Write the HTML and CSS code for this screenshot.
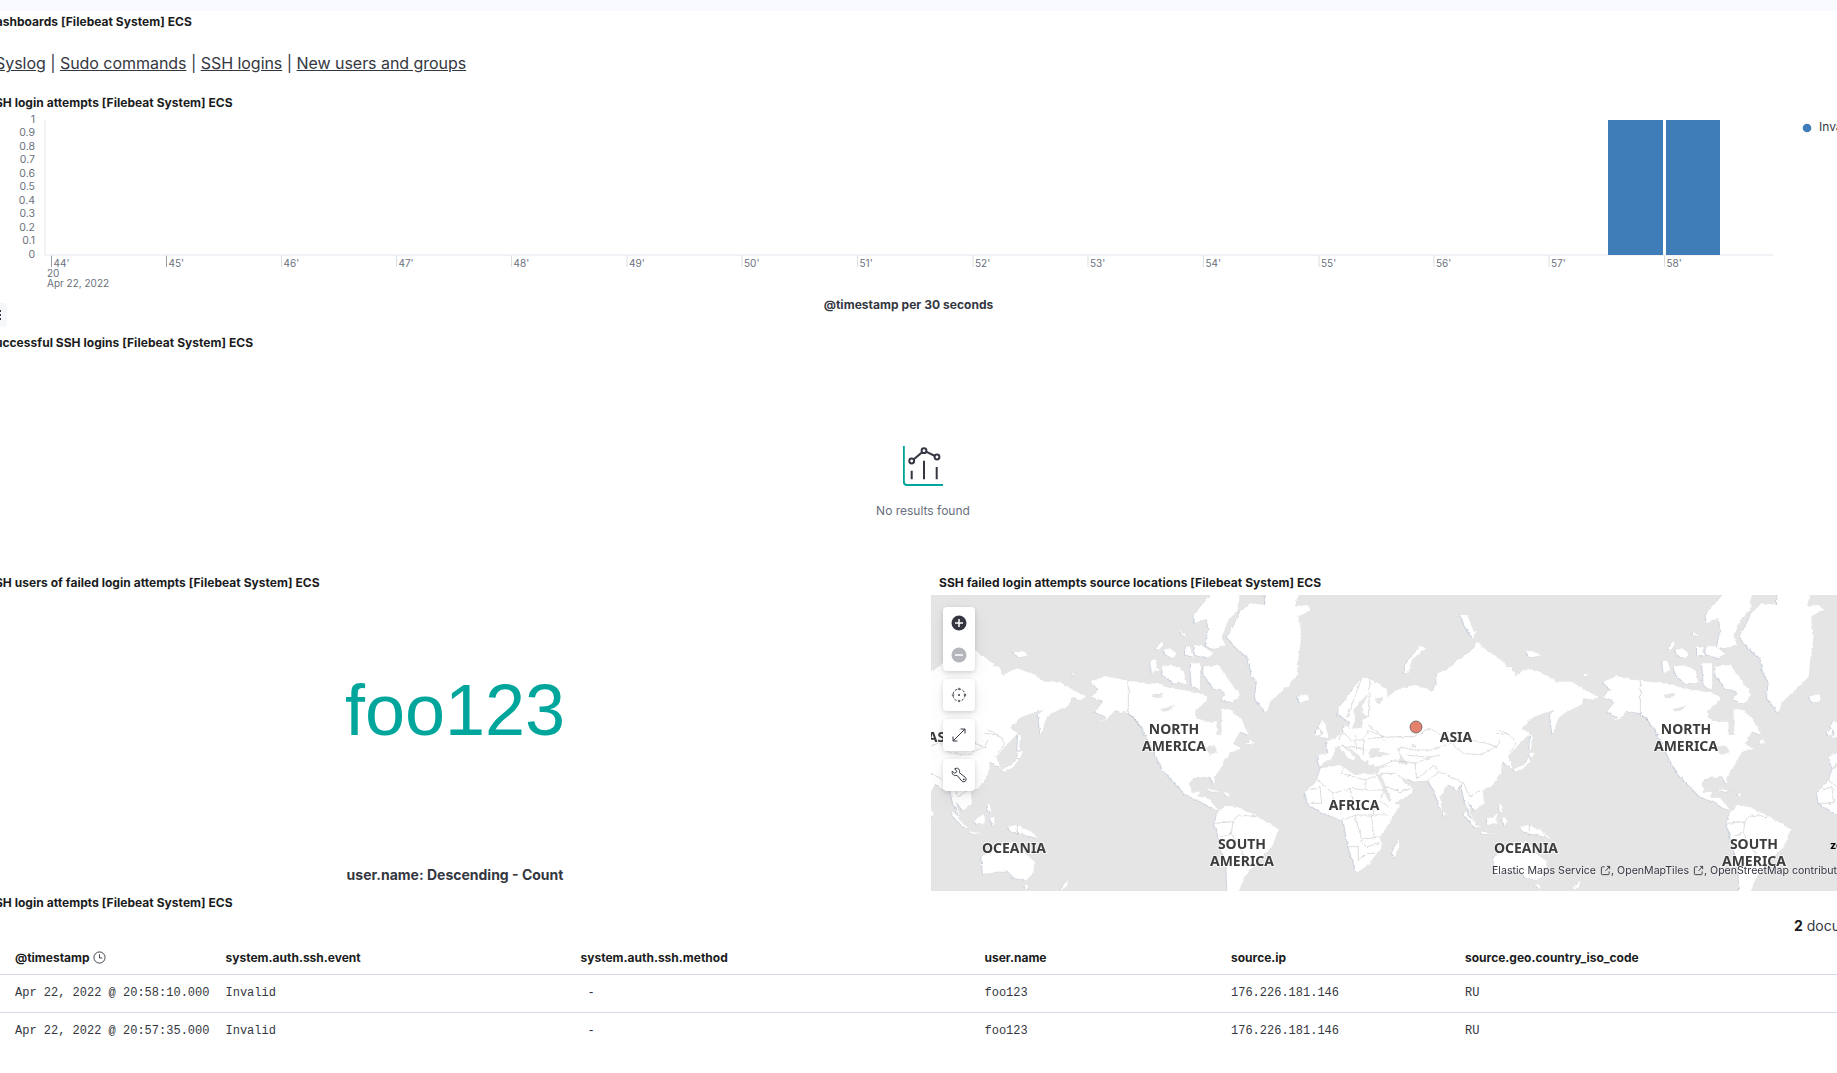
FILE: index.html
```html
<!DOCTYPE html>
<html lang="en">
<head>
<meta charset="utf-8">
<title>Dashboards [Filebeat System] ECS</title>
<link rel="stylesheet" href="styles.css">
</head>
<body>
<div class="page">
  <div class="topbar"></div>

  <section class="panel panel-links">
    <h2 class="title">Dashboards [Filebeat System] ECS</h2>
    <p class="links"><a href="#">Syslog</a> | <a href="#">Sudo commands</a> | <a href="#">SSH logins</a> | <a href="#">New users and groups</a></p>
  </section>

  <section class="panel panel-chart">
    <h2 class="title">SSH login attempts [Filebeat System] ECS</h2>
    <svg class="chart" viewBox="-13 114 1850 216" width="1850" height="216">
      <g class="ticks">
        <path class="tick-dark" d="M51.5 255v12M166.5 255v12"/>
        <path d="M281.5 255v12M396.5 255v12M511.5 255v12M627 255v12M742 255v12M857.5 255v12M973 255v12M1088 255v12M1203.5 255v12M1319 255v12M1434 255v12M1549 255v12M1664.5 255v12"/>
      </g>
      <path class="axis" d="M45 120V255H1773"/>
      <rect class="bar" x="1608" y="120" width="55" height="135"/>
      <rect class="bar" x="1666" y="120" width="54" height="135"/>
      <g class="ylabels">
        <text x="35" y="123">1</text><text x="35" y="136">0.9</text><text x="35" y="150">0.8</text><text x="35" y="163">0.7</text><text x="35" y="177">0.6</text><text x="35" y="190">0.5</text><text x="35" y="204">0.4</text><text x="35" y="217">0.3</text><text x="35" y="231">0.2</text><text x="35" y="244">0.1</text><text x="35" y="258">0</text>
      </g>
      <g class="xlabels">
        <text x="53.500" y="267">44'</text><text x="168.500" y="267">45'</text><text x="283.500" y="267">46'</text><text x="398.500" y="267">47'</text><text x="513.500" y="267">48'</text><text x="629" y="267">49'</text><text x="744" y="267">50'</text><text x="859.500" y="267">51'</text><text x="975" y="267">52'</text><text x="1090" y="267">53'</text><text x="1205.500" y="267">54'</text><text x="1321" y="267">55'</text><text x="1436" y="267">56'</text><text x="1551" y="267">57'</text><text x="1666.500" y="267">58'</text>
        <text x="47" y="277">20</text><text x="47" y="287">Apr 22, 2022</text>
      </g>
      <text class="xtitle" x="908.500" y="309">@timestamp per 30 seconds</text>
      <circle class="legend-dot" cx="1807" cy="128" r="4.300"/>
      <text class="legend" x="1819" y="131">Invalid</text>
    </svg>
    <div class="handle"><span></span><span></span><span></span></div>
  </section>

  <section class="panel panel-empty">
    <h2 class="title">Successful SSH logins [Filebeat System] ECS</h2>
    <div class="empty">
      <svg class="empty-icon" viewBox="0 0 40 40" width="40" height="40">
        <path class="empty-axis" d="M.8 0V35.500Q.8 39 4.300 39H40"/>
        <path class="empty-lines" d="M8.700 24.700V33.300M21 14.700V33.300M33.700 21V33.300M8.700 15L21 4.700L34 11"/>
        <circle class="empty-node" cx="8.700" cy="15" r="2.400"/><circle class="empty-node" cx="21" cy="4.700" r="2.400"/><circle class="empty-node" cx="34" cy="11" r="2.400"/>
      </svg>
      <div class="empty-text">No results found</div>
    </div>
  </section>

  <div class="split">
    <section class="panel cloud-panel">
      <h2 class="title">SSH users of failed login attempts [Filebeat System] ECS</h2>
      <div class="cloud">foo123</div>
      <div class="cloud-label">user.name: Descending - Count</div>
    </section>
    <section class="panel map-panel">
      <h2 class="title title-inset">SSH failed login attempts source locations [Filebeat System] ECS</h2>
      <div class="map">
        <svg class="map-svg" viewBox="931 595 928 296" width="928" height="296">
          <defs>
            <filter id="rough" filterUnits="userSpaceOnUse" x="931" y="595" width="928" height="296">
              <feTurbulence type="fractalNoise" baseFrequency=".22" numOctaves="2" seed="4" result="noise"/>
              <feDisplacementMap in="SourceGraphic" in2="noise" scale="3.500" xChannelSelector="R" yChannelSelector="G"/>
            </filter>
            <g id="land">
              <g transform="translate(1300 640) scale(.33333)">
                <path d="M200,112 L225,125 L262,150 L262,170 L300,145 L345,135 L380,145 L395,160 L408,130 L412,100 L440,90 L470,62 L510,35 L530,5 L560,30 L620,75 L620,360 L600,360 L590,378 L600,400 L575,440 L548,452 L552,490 L525,512 L502,482 L508,505 L522,545 L495,490 L482,432 L470,450 L442,432 L420,470 L425,512 L400,450 L385,422 L340,425 L320,415 L335,445 L338,458 L282,490 L300,495 L270,545 L240,590 L245,622 L222,650 L210,672 L170,698 L145,622 L130,540 L72,522 L20,490 L14,460 L50,420 L62,385 L55,370 L52,345 L85,340 L78,305 L105,295 L130,270 L135,255 L145,265 L150,245 L115,225 L115,205 L135,180 L165,135 L185,115Z"/>
                <path d="M65,240 L75,250 L85,290 L55,295 L70,280 L55,260Z"/>
                <path d="M48,272 L60,266 L60,285 L48,287Z"/>
                <path d="M295,600 L300,605 L285,650 L275,640Z"/>
                <path d="M360,20 L375,25 L335,60 L325,100 L312,100 L320,65Z"/>
                <path d="M430,515 L437,520 L434,530 L428,525Z"/>
              </g>
              <g transform="translate(1500 640) scale(.33333)">
                <path d="M-10,80 L35,82 L45,105 L85,85 L130,100 L170,125 L215,125 L255,150 L295,170 L280,180 L250,175 L245,195 L195,218 L175,235 L157,285 L150,225 L165,210 L145,215 L100,232 L65,265 L90,280 L60,310 L30,345 L8,355 L25,350 L38,385 L22,375 L5,365 L3,405 L-10,400Z"/>
                <path d="M90,285 L97,285 L93,330 L88,330Z"/>
                <path d="M90,340 L105,335 L95,355 L85,350Z"/>
                <path d="M85,355 L92,360 L72,385 L45,395 L40,388 L70,375Z"/>
                <path d="M75,32 L98,34 L125,48 L90,52Z"/>
                <path d="M255,102 L263,103 L260,108 L253,107Z"/>
                <path d="M240,718 L235,740 L215,752 L228,735Z"/>
              </g>
              <g transform="translate(1380 570) scale(.33333)">
                <path d="M240,135 L262,135 L282,185 L290,182 L278,203 L258,175Z"/>
                <path d="M255,725 L300,775 L290,775 L250,735Z"/>
                <path d="M305,785 L345,790 L305,793Z"/>
                <path d="M320,750 L350,730 L350,760 L325,765Z"/>
                <path d="M365,745 L380,740 L375,770Z"/>
                <path d="M355,700 L365,705 L370,730 L358,720Z"/>
                <path d="M420,770 L445,765 L490,785 L510,805 L470,795 L430,785Z"/>
                <path d="M340,860 L370,840 L395,825 L415,825 L440,815 L470,850 L500,875 L495,915 L470,930 L440,925 L420,905 L385,905 L345,915Z"/>
                <path d="M465,945 L480,945 L475,958Z"/>
                <path d="M1050,725 L1075,705 L1110,712 L1160,735 L1232,778 L1212,830 L1170,870 L1130,920 L1110,970 L1078,970 L1075,890 L1050,795 L1038,762Z"/>
                <path d="M1010,655 L1060,665 L1030,665Z"/>
                <path d="M1070,670 L1085,672 L1075,678Z"/>
              </g>
              <g transform="translate(1662 595) scale(.33333)">
                <path d="M-176,260 L-136,243 L-66,257 L-30,262 L30,268 L60,280 L100,285 L150,295 L175,305 L170,325 L205,330 L240,345 L270,370 L297,420 L270,410 L250,445 L272,462 L240,472 L215,515 L195,545 L192,568 L180,545 L130,550 L118,565 L125,590 L150,590 L145,605 L175,610 L204,645 L184,640 L154,620 L114,605 L74,565 L39,525 L9,465 L-20,405 L-50,365 L-66,355 L-106,347 L-126,370 L-161,385 L-131,367 L-166,350 L-141,320 L-176,305 L-156,285Z"/>
                <path d="M190,-10 L270,-10 L265,40 L235,75 L215,125 L225,150 L190,162 L165,155 L175,105 L170,70 L135,85 L130,60 L155,30Z"/>
                <path d="M90,105 L110,125 L95,120Z"/>
                <path d="M15,160 L35,140 L40,150 L25,165Z"/>
                <path d="M40,165 L60,160 L80,175 L70,190 L45,180Z"/>
                <path d="M105,155 L120,155 L128,185 L105,180Z"/>
                <path d="M130,150 L160,155 L190,175 L170,190 L135,180Z"/>
                <path d="M0,200 L15,195 L25,225 L5,235Z"/>
                <path d="M35,215 L65,210 L100,225 L110,265 L70,265 L40,240Z"/>
                <path d="M120,205 L150,205 L150,285 L125,270Z"/>
                <path d="M160,215 L205,210 L240,260 L270,300 L245,325 L215,315 L225,290 L190,280 L160,240Z"/>
                <path d="M345,-10 L345,30 L300,25 L270,50 L250,95 L230,125 L260,160 L295,190 L305,240 L320,260 L315,310 L350,355 L360,320 L400,285 L440,245 L445,190 L455,120 L445,65 L485,45 L470,30 L435,35 L445,-10Z"/>
                <path d="M440,305 L470,298 L478,315 L450,323Z"/>
                <path d="M300,432 L310,445 L290,447Z"/>
              </g>
            </g>
            <g id="waters">
              <g transform="translate(1300 640) scale(.33333)">
                <path d="M62,378 L95,355 L105,325 L125,318 L150,325 L175,345 L190,365 L205,360 L205,375 L275,378 L240,385 L235,400 L165,405 L120,375 L65,385Z"/>
                <path d="M205,340 L215,325 L240,325 L235,335 L270,340 L240,352 L210,350Z"/>
                <path d="M290,325 L305,320 L300,340 L315,360 L322,372 L295,372 L300,350Z"/>
                <path d="M335,312 L345,312 L345,322 L335,322Z"/>
                <path d="M232,405 L240,400 L275,480 L265,485Z"/>
                <path d="M300,408 L320,420 L335,425 L325,440 L305,420Z"/>
                <path d="M155,270 L165,235 L160,210 L180,185 L195,170 L205,165 L190,190 L185,215 L205,230 L190,240 L185,262Z"/>
                <path d="M225,170 L250,175 L235,195Z"/>
                <path d="M385,85 L395,100 L390,140 L378,110Z"/>
              </g>
              <g transform="translate(1662 595) scale(.33333)">
                <path d="M135,350 L165,320 L205,315 L235,345 L215,340 L215,420 L200,420 L200,380 L165,380 L140,370Z"/>
                <path d="M5,298 L40,293 L30,308 L10,310Z"/>
                <path d="M30,342 L75,333 L60,345 L40,350Z"/>
                <path d="M165,455 L190,450 L205,470 L180,480 L170,470Z"/>
              </g>
            </g>
            <g id="overland">
              <g transform="translate(1300 640) scale(.33333)">
                <path d="M118,315 L135,325 L165,350 L162,362 L148,355 L120,325Z"/>
                <path d="M205,352 L240,355 L270,345 L280,355 L280,375 L240,380 L210,372Z"/>
                <path d="M175,345 L190,345 L198,365 L188,362Z"/>
              </g>
            </g>
            <g id="borders">
              <g transform="translate(1300 640) scale(.33333)">
                <path d="M50,420 L100,460 L150,445 L195,450 L250,450 M130,380 L125,400 L195,420 L195,450 M235,405 L195,420 M100,460 L100,500 M60,440 L65,490 M30,450 L60,440 M20,490 L65,490 M150,445 L160,480 M130,540 L165,525 L215,525 L265,525 M165,525 L185,600 L240,590 M215,525 L220,590 M145,620 L175,620 L175,660 L205,640 L225,640 M180,600 L200,620 L240,610 M250,450 L240,485 L270,500 M225,480 L220,525"/>
                <path d="M205,295 L290,290 L340,290 L390,265 L450,300 L500,300 L560,310 L590,320 L540,345 L490,340 L450,305 M300,320 L340,330 L400,330 L450,310 M320,345 L360,350 L395,350 L420,345 M285,360 L345,370 L350,415 L405,375 L415,395 L385,422 M415,395 L470,420 L490,430 L470,450 M240,400 L285,400 L300,410 M255,440 L300,455 L335,445 M490,430 L510,470 L540,450 M590,320 L600,300 M345,370 L395,350 M240,380 L285,360"/>
                <path d="M115,300 L130,270 M130,275 L150,300 L190,300 L205,270 L250,290 M110,320 L150,320 L200,330 M165,285 L170,330 M190,300 L190,345 M205,255 L240,280 L258,310 M185,115 L140,235 M210,115 L205,230"/>
              </g>
              <g transform="translate(1500 640) scale(.33333)">
                <path d="M0,270 L30,285 L50,310 L30,340 M30,285 L-10,280"/>
              </g>
              <g transform="translate(1380 570) scale(.33333)">
                <path d="M781,333 L781,430 L820,470"/>
                <path d="M448,765 L448,795"/>
                <path d="M1040,760 L1095,755 L1110,735 M1095,755 L1090,790 L1060,800 M1090,790 L1125,850 L1130,890 L1090,880 M1110,735 L1165,740"/>
              </g>
            </g>
            <g id="world">
              <use href="#land" class="land-shade" transform="translate(-1 .5)"/>
              <use href="#land" class="land-fill"/>
              <use href="#waters" class="water-fill"/>
              <use href="#overland" class="land-fill"/>
              <use href="#borders" class="border-line"/>
            </g>
          </defs>
          <g filter="url(#rough)">
            <use href="#world" x="-512"/>
            <use href="#world"/>
            <use href="#world" x="512"/>
          </g>
          <g class="map-labels">
            <text x="1174" y="734">NORTH</text><text x="1174" y="751">AMERICA</text>
            <text x="1686" y="734">NORTH</text><text x="1686" y="751">AMERICA</text>
            <text x="1354" y="810">AFRICA</text>
            <text x="1456" y="742">ASIA</text><text x="944" y="742">ASIA</text>
            <text x="1014" y="853">OCEANIA</text><text x="1526" y="853">OCEANIA</text>
            <text x="1242" y="849">SOUTH</text><text x="1242" y="866">AMERICA</text>
            <text x="1754" y="849">SOUTH</text><text x="1754" y="866">AMERICA</text>
          </g>
          <circle class="marker" cx="1416" cy="727" r="6"/>
          <text class="zoom-label" x="1830" y="849">zoom: 1.53</text>
        </svg>
        <div class="controls">
          <div class="ctrl ctrl-double">
            <button class="ctrl-btn" aria-label="Zoom in"><svg viewBox="0 0 16 16" width="16" height="16"><circle class="dark" cx="8" cy="8" r="7.500"/><path class="white-line" d="M8 4v8M4 8h8"/></svg></button>
            <button class="ctrl-btn" aria-label="Zoom out"><svg viewBox="0 0 16 16" width="16" height="16"><circle class="muted" cx="8" cy="8" r="7.500"/><path class="white-line" d="M4 8h8"/></svg></button>
          </div>
          <div class="ctrl">
            <button class="ctrl-btn" aria-label="Fit"><svg viewBox="0 0 16 16" width="16" height="16"><circle class="dashed" cx="8" cy="8" r="6"/><circle class="dark" cx="8" cy="8" r="1"/><path class="thin" d="M8 .8v2.400M8 12.800v2.400M.8 8h2.400M12.800 8h2.400"/></svg></button>
          </div>
          <div class="ctrl">
            <button class="ctrl-btn" aria-label="Expand"><svg viewBox="0 0 16 16" width="16" height="16"><path class="thin" d="M2 14L14 2M9.500 2H14V6.500M2 9.500V14H6.500"/></svg></button>
          </div>
          <div class="ctrl">
            <button class="ctrl-btn" aria-label="Tools"><svg viewBox="0 0 16 16" width="16" height="16"><path class="thin" d="M1.200 4.200L3.800 6.300L6 4.500L3.700 1.800C5.500.5 8 1.200 8.500 3.500C8.700 4.500 8.600 5 8.400 5.700L14.500 10.500C15.800 11.700 15 14.400 13.200 14.800C12.300 15 11.500 14.700 10.800 14L6 8.300C4.800 8.800 3.500 8.700 2.500 8C1.400 7.200 .9 5.600 1.200 4.200Z"/><circle class="dark" cx="12.800" cy="12.300" r=".9"/></svg></button>
          </div>
        </div>
        <div class="attrib"><a href="#">Elastic Maps Service</a><svg class="ext" viewBox="0 0 12 12" width="11" height="11"><path class="thin" d="M5 2H2.500Q1.500 2 1.500 3V9.500Q1.500 10.500 2.500 10.500H9Q10 10.500 10 9.500V7M6 6.500L10.500 1.500M7.500 1.500H10.500V4.500"/></svg>, <a href="#">OpenMapTiles</a><svg class="ext" viewBox="0 0 12 12" width="11" height="11"><path class="thin" d="M5 2H2.500Q1.500 2 1.500 3V9.500Q1.500 10.500 2.500 10.500H9Q10 10.500 10 9.500V7M6 6.500L10.500 1.500M7.500 1.500H10.500V4.500"/></svg>, <a href="#">OpenStreetMap contributors</a></div>
      </div>
    </section>
  </div>

  <section class="panel panel-table">
    <h2 class="title">SSH login attempts [Filebeat System] ECS</h2>
    <div class="doc-count"><b>2</b> documents</div>
    <table class="docs">
      <colgroup><col class="c1"><col class="c2"><col class="c3"><col class="c4"><col class="c5"><col class="c6"></colgroup>
      <thead>
        <tr>
          <th><span class="th-flex">@timestamp<svg viewBox="0 0 14 14" width="13" height="13"><circle class="thin" cx="7" cy="7" r="6"/><path class="thin" d="M7 3.500V7.500H10"/></svg></span></th>
          <th>system.auth.ssh.event</th><th>system.auth.ssh.method</th><th>user.name</th><th>source.ip</th><th>source.geo.country_iso_code</th>
        </tr>
      </thead>
      <tbody>
        <tr><td>Apr 22, 2022 @ 20:58:10.000</td><td>Invalid</td><td class="dash">-</td><td>foo123</td><td>176.226.181.146</td><td>RU</td></tr>
        <tr><td>Apr 22, 2022 @ 20:57:35.000</td><td>Invalid</td><td class="dash">-</td><td>foo123</td><td>176.226.181.146</td><td>RU</td></tr>
      </tbody>
    </table>
  </section>
</div>
</body>
</html>
```

FILE: styles.css
```css
* { box-sizing: border-box; }
html, body { margin: 0; padding: 0; height: 1073px; overflow: hidden; background: #fff; }
body { font-family: Inter, "Noto Sans", sans-serif; color: #343741; }

.page { width: 1872px; margin-left: -13px; }
.topbar { height: 11px; background: #f8fafd; }

.panel { position: relative; }
.title { margin: 0; height: 22px; font-size: 12px; line-height: 22px; font-weight: 700; letter-spacing: .04px; color: #1a1c21; white-space: nowrap; }
.title-inset { padding-left: 8px; }

.panel-links { height: 81px; }
.links { margin: 18px 0 0; padding: 0 8px; font-size: 16px; line-height: 24px; letter-spacing: -.04px; color: #343741; white-space: nowrap; }
.links a { color: #343741; text-decoration: underline; }

.panel-chart { height: 240px; }
.chart { display: block; }
.ticks path { stroke: #dcdde0; stroke-width: 1; fill: none; }
.ticks .tick-dark { stroke: #9a9da3; }
.axis { fill: none; stroke: #eef0f3; stroke-width: 1.500; }
.bar { fill: #3f7db8; }
.ylabels text { font-size: 10.500px; fill: #6a717d; text-anchor: end; }
.xlabels text { font-size: 10px; fill: #6a717d; }
.xtitle { font-size: 12px; font-weight: 700; letter-spacing: .04px; fill: #343741; text-anchor: middle; }
.legend-dot { fill: #3f7db8; }
.legend { font-size: 12px; fill: #343741; }
.handle { position: absolute; left: 6px; top: 211px; width: 14px; height: 24px; border-radius: 4px; background: #f5f7fa; display: flex; flex-direction: column; align-items: center; justify-content: center; gap: 2px; }
.handle span { width: 2px; height: 2px; background: #343741; }

.panel-empty { height: 239px; }
.empty { display: flex; flex-direction: column; align-items: center; padding-top: 92px; }
.empty-icon { display: block; }
.empty-axis { fill: none; stroke: #00a69b; stroke-width: 2; }
.empty-lines { fill: none; stroke: #343741; stroke-width: 2; }
.empty-node { fill: #fff; stroke: #343741; stroke-width: 2; }
.empty-text { margin-top: 16px; font-size: 12px; line-height: 18px; color: #69707d; }

.split { display: grid; grid-template-columns: 936px 928px; column-gap: 8px; height: 320px; }
.split .title { height: 24px; line-height: 24px; }
.cloud { height: 230px; display: flex; align-items: center; justify-content: center; font-family: "Liberation Sans", Arial, sans-serif; font-size: 72px; color: #00a69b; }
.cloud-label { margin-top: 40px; text-align: center; font-size: 14px; line-height: 20px; font-weight: 700; color: #343741; }

.map { position: relative; height: 296px; background: #e5e5e5; overflow: hidden; }
.map-svg { display: block; }
.land-fill { fill: #fff; }
.land-shade { fill: #ccd3dd; }
.water-fill { fill: #e5e5e5; }
.border-line { fill: none; stroke: #b9b9b9; stroke-width: 1.500; }
.map-labels text { font-family: "Noto Sans", sans-serif; font-size: 14px; font-weight: 700; fill: #3c3c3c; stroke: rgba(255,255,255,.6); stroke-width: 2px; paint-order: stroke; text-anchor: middle; }
.marker { fill: #e7816f; stroke: #5f5f5f; stroke-width: .8; }
.zoom-label { font-size: 11px; font-weight: 700; fill: #000; }

.controls { position: absolute; left: 12px; top: 12px; display: flex; flex-direction: column; gap: 8px; }
.ctrl { width: 32px; background: #fff; border-radius: 4px; box-shadow: 0 1px 4px rgba(0,0,0,.1), 0 3px 9px rgba(0,0,0,.08), 0 6px 20px rgba(0,0,0,.06); }
.ctrl-btn { display: flex; align-items: center; justify-content: center; width: 32px; height: 32px; padding: 0; border: 0; background: none; }
.dark { fill: #343741; }
.muted { fill: #b4b6bb; }
.white-line { stroke: #fff; stroke-width: 1.500; fill: none; }
.dashed { fill: none; stroke: #343741; stroke-width: 1; stroke-dasharray: 2.400 1.500; }
.thin { fill: none; stroke: #343741; stroke-width: 1; }

.attrib { position: absolute; left: 561px; top: 269px; font-size: 10.600px; line-height: 14px; color: #343741; white-space: nowrap; text-shadow: 0 0 2px rgba(255,255,255,.8); }
.attrib a { color: #343741; text-decoration: none; }
.ext { margin-left: 4px; vertical-align: -2px; }

.panel-table { margin-top: 1px; }
.doc-count { margin-top: 2px; padding-left: 1807px; font-size: 14px; line-height: 20px; color: #343741; white-space: nowrap; }
.doc-count b { color: #1a1c21; font-weight: 700; }
.docs { border-collapse: collapse; table-layout: fixed; width: 1872px; }
.c1 { width: 238.500px; }
.c2 { width: 355px; }
.c3 { width: 404px; }
.c4 { width: 246.500px; }
.c5 { width: 234px; }
.docs th { height: 38px; padding: 5px 0 0; text-align: left; font-size: 12px; font-weight: 700; color: #1a1c21; border-bottom: 1px solid #d3dae6; white-space: nowrap; }
.docs td { height: 38px; padding: 0; font-family: "Liberation Mono", "DejaVu Sans Mono", monospace; font-size: 12px; color: #343741; border-bottom: 1px solid #d3dae6; white-space: nowrap; }
.docs tr:last-child td { border-bottom: 0; }
.docs th:first-child, .docs td:first-child { padding-left: 28px; }
.th-flex { display: inline-flex; align-items: center; gap: 3px; }
.docs .dash { padding-left: 7px; }
```
